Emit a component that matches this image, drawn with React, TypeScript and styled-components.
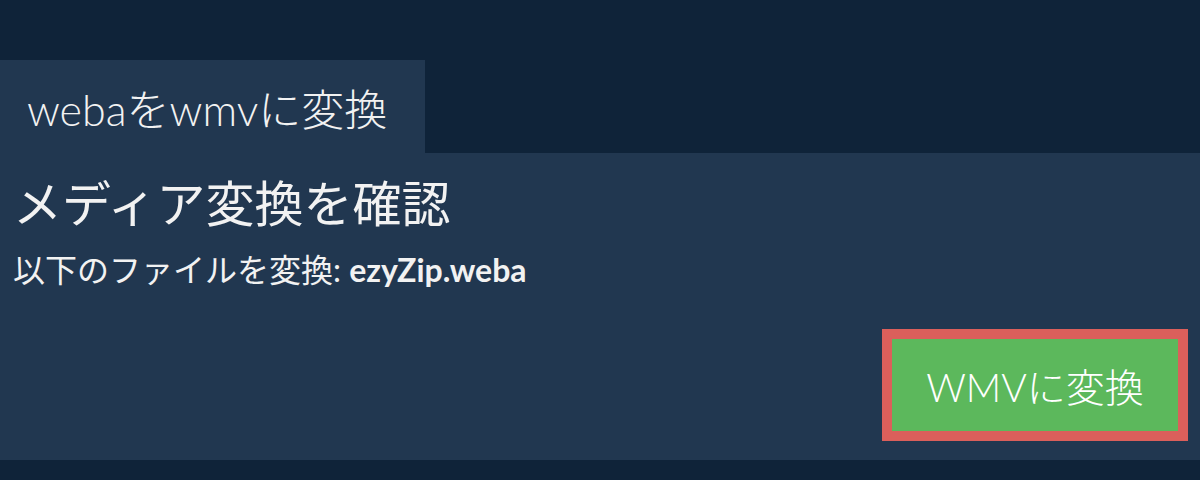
import React from 'react'
import styled, { createGlobalStyle } from 'styled-components'

const GlobalStyle = createGlobalStyle`
  html, body {
    margin: 0;
    padding: 0;
    background: #0f2339;
    font-family: Lato, "Noto Sans CJK JP", sans-serif;
    color: #f2f2f2;
  }
`

const Page = styled.div`
  height: 480px;
  padding-top: 60px;
  box-sizing: border-box;
`

const Tab = styled.div`
  width: 425px;
  height: 93px;
  box-sizing: border-box;
  padding-left: 27px;
  display: flex;
  align-items: center;
  background: #213750;
  font-size: 43px;
  font-weight: 300;
`

const Panel = styled.section`
  height: 307px;
  box-sizing: border-box;
  padding: 21px 12px 0 13px;
  background: #213750;
  display: flex;
  flex-direction: column;
`

const Title = styled.h2`
  margin: 0;
  font-size: 49px;
  font-weight: 400;
  line-height: 59px;
`

const Subtitle = styled.p`
  margin: 18px 0 0;
  font-size: 32px;
  line-height: 38px;

  strong {
    font-weight: 700;
  }
`

const Actions = styled.div`
  display: flex;
  justify-content: flex-end;
  margin-top: 40px;
`

const ConvertButton = styled.button`
  width: 306px;
  height: 112px;
  border: 10px solid #db5f5b;
  background: #5cb85c;
  color: #fff;
  font-family: Lato, "Noto Sans CJK JP", sans-serif;
  font-size: 39px;
  font-weight: 300;
  cursor: pointer;
`

export default function App() {
  return (
    <>
      <GlobalStyle />
      <Page>
        <Tab>webaをwmvに変換</Tab>
        <Panel>
          <Title>メディア変換を確認</Title>
          <Subtitle>
            以下のファイルを変換: <strong>ezyZip.weba</strong>
          </Subtitle>
          <Actions>
            <ConvertButton>WMVに変換</ConvertButton>
          </Actions>
        </Panel>
      </Page>
    </>
  )
}
